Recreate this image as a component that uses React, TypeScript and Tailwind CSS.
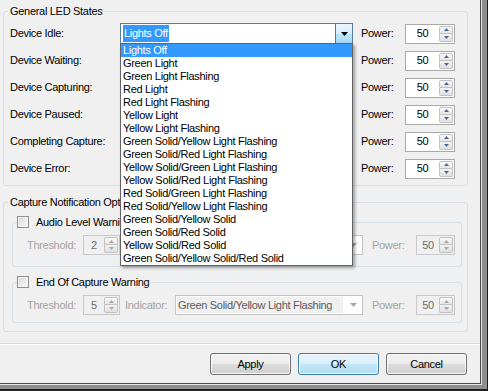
const options = [
  "Lights Off",
  "Green Light",
  "Green Light Flashing",
  "Red Light",
  "Red Light Flashing",
  "Yellow Light",
  "Yellow Light Flashing",
  "Green Solid/Yellow Light Flashing",
  "Green Solid/Red Light Flashing",
  "Yellow Solid/Green Light Flashing",
  "Yellow Solid/Red Light Flashing",
  "Red Solid/Green Light Flashing",
  "Red Solid/Yellow Light Flashing",
  "Green Solid/Yellow Solid",
  "Green Solid/Red Solid",
  "Yellow Solid/Red Solid",
  "Green Solid/Yellow Solid/Red Solid",
]

// rows 2-6 sit under the open list, so their values are not drawn
const states = [
  { label: "Device Idle:", value: "Lights Off" },
  { label: "Device Waiting:", value: "" },
  { label: "Device Capturing:", value: "" },
  { label: "Device Paused:", value: "" },
  { label: "Completing Capture:", value: "" },
  { label: "Device Error:", value: "" },
]

function SpinButtons({ disabled }: { disabled?: boolean }) {
  const tri = disabled ? "#a8a8a8" : "#50679a"
  return (
    <div className="flex h-[16px] w-[14px] flex-col">
      <div className="flex h-[8px] items-center justify-center rounded-t-[2px] border border-[#c2c2c2] bg-[linear-gradient(#fafafa,#e6e6e6)]">
        <svg width="5" height="3" viewBox="0 0 5 3">
          <path d="M0 3L2.5 0L5 3Z" fill={tri} />
        </svg>
      </div>
      <div className="flex h-[8px] items-center justify-center rounded-b-[2px] border border-t-0 border-[#c2c2c2] bg-[linear-gradient(#f2f2f2,#e0e0e0)]">
        <svg width="5" height="3" viewBox="0 0 5 3">
          <path d="M0 0H5L2.5 3Z" fill={tri} />
        </svg>
      </div>
    </div>
  )
}

function Spin({ value, width, disabled }: { value: string; width: string; disabled?: boolean }) {
  return (
    <div
      className={`flex h-[20px] items-center border pr-[1px] ${width} ${
        disabled ? "border-[#c9c9c9] bg-[#f0f0f0] text-[#6d6d6d]" : "border-[#a9a9a9] bg-white text-black"
      }`}
    >
      <span className="flex-1 text-center">{value}</span>
      <SpinButtons disabled={disabled} />
    </div>
  )
}

function Combo({ value, active }: { value: string; active?: boolean }) {
  return (
    <div
      className={`flex h-[21px] w-[233px] items-center border bg-white ${
        active ? "border-[#5b7a99]" : "border-[#abadb3]"
      }`}
    >
      <span className={`ml-[2px] px-[1px] ${active ? "bg-[#3399ff] text-white" : ""}`}>{value}</span>
      <div
        className={`ml-auto flex h-full w-[17px] items-center justify-center border-l ${
          active
            ? "border-[#3c7fb1] bg-[linear-gradient(#eaf6fd_0%,#d9f0fc_50%,#bee6fd_51%,#a7d9f5_100%)]"
            : "border-[#acacac] bg-[linear-gradient(#f2f2f2,#dddddd)]"
        }`}
      >
        <svg width="7" height="4" viewBox="0 0 7 4">
          <path d="M0 0H7L3.5 4Z" fill="#000" />
        </svg>
      </div>
    </div>
  )
}

function DisabledCombo({ value }: { value: string }) {
  return (
    <div className="flex h-[20px] w-[188px] items-center border border-[#c5c5c5] bg-white">
      <span className="m-[1px] flex h-[16px] flex-1 items-center bg-[#f0f0f0] pl-[1px] text-[#5a5a5a]">{value}</span>
      <div className="flex h-full w-[18px] items-center justify-center">
        <svg width="7" height="4" viewBox="0 0 7 4">
          <path d="M0 0H7L3.5 4Z" fill="#a6a6a6" />
        </svg>
      </div>
    </div>
  )
}

function CheckBox() {
  return (
    <span className="inline-block h-[12px] w-[12px] border border-[#8e8f8f] bg-[linear-gradient(135deg,#d8d8d8,#fcfcfc)] shadow-[inset_0_0_0_1px_#f4f4f4]" />
  )
}

function WarningGroup({
  title,
  threshold,
  covered,
  children,
}: {
  title: string
  threshold: string
  covered?: boolean
  children?: React.ReactNode
}) {
  return (
    <fieldset className="rounded-[3px] border border-[#d5dfe5]">
      <legend className="ml-[4px] pr-[2px] leading-[14px]">
        <span className="flex items-center">
          <CheckBox />
          <span className="ml-[7px]">{title}</span>
        </span>
      </legend>
      <div className="pl-[14px] pt-[6px]">
        <div className="flex h-[20px] items-center text-[#a3a3a3]">
          <span className="w-[56px]">Threshold:</span>
          <Spin value={threshold} width="w-[37px]" disabled />
          <span className="ml-[5px] w-[50px]">{covered ? "" : "Indicator:"}</span>
          <DisabledCombo value={covered ? "" : "Green Solid/Yellow Light Flashing"} />
          <span className="ml-[9px] w-[44px]">Power:</span>
          <Spin value="50" width="w-[39px]" disabled />
        </div>
        {children}
      </div>
    </fieldset>
  )
}

function Btn({ label, primary }: { label: string; primary?: boolean }) {
  return (
    <div
      className={`flex h-[22px] w-[81px] items-center justify-center rounded-[3px] border ${
        primary
          ? "border-[#3c7fb1] bg-[linear-gradient(#e9f5fc_0%,#daf0fc_50%,#c2e6f8_51%,#b3dcf3_100%)] shadow-[inset_0_0_0_1px_#f7fbfe]"
          : "border-[#707070] bg-[linear-gradient(#f2f2f2_0%,#ebebeb_50%,#dddddd_51%,#cfcfcf_100%)] shadow-[inset_0_0_0_1px_#fbfbfb]"
      }`}
    >
      {label}
    </div>
  )
}

export default function App() {
  return (
    <div className="h-[391px] w-[488px] bg-[#1e1e1e] font-['Liberation_Sans',Arial,sans-serif] text-[11px] tracking-[-0.3px] text-black">
      <div className="h-[389px] w-[487px] bg-[#8e8e8e]">
        <div className="h-[385px] w-[482px] bg-[#e4e4e4]">
          <div className="relative h-[384px] w-[481px] border-r border-b border-[#4a4a4a] bg-[#f0f0f0]">
            <div className="px-[3px] pt-[4px]">
              {/* general LED states */}
              <fieldset className="w-[465px] rounded-[3px] border border-[#d5dfe5]">
                <legend className="ml-[4px] px-[2px] leading-[14px]">General LED States</legend>
                <div className="flex flex-col gap-[6px] px-[6px] pt-[5px] pb-[6px]">
                  {states.map((s, i) => (
                    <div key={s.label} className="flex h-[21px] items-center">
                      <span className="w-[110px]">{s.label}</span>
                      <Combo value={s.value} active={i === 0} />
                      <span className="ml-[8px] w-[44px]">Power:</span>
                      <Spin value="50" width="w-[50px]" />
                    </div>
                  ))}
                </div>
              </fieldset>

              {/* capture notification options */}
              <fieldset className="mt-[9px] w-[465px] rounded-[3px] border border-[#d5dfe5]">
                <legend className="ml-[4px] px-[2px] leading-[14px]">Capture Notification Options</legend>
                <div className="flex flex-col gap-[8px] pt-[6px] pr-[5px] pb-[8px] pl-[8px]">
                  <WarningGroup title="Audio Level Warning" threshold="2" covered>
                    <div className="h-[11px]" />
                  </WarningGroup>
                  <WarningGroup title="End Of Capture Warning" threshold="5">
                    <div className="h-[7px]" />
                  </WarningGroup>
                </div>
              </fieldset>
            </div>

            <div className="mt-[11px] h-[2px] border-t border-b border-t-[#d9d9d9] border-b-white" />

            <div className="mt-[8px] flex justify-end gap-[7px] pr-[13px]">
              <Btn label="Apply" />
              <Btn label="OK" primary />
              <Btn label="Cancel" />
            </div>

            {/* open dropdown list */}
            <div className="absolute top-[43px] left-[120px] z-10 w-[233px] border border-[#646464] bg-white shadow-[2px_2px_3px_rgba(0,0,0,0.35)]">
              {options.map((o, i) => (
                <div
                  key={o}
                  className={`h-[13px] pl-[2px] leading-[13px] whitespace-nowrap ${i === 0 ? "bg-[#3399ff] text-white" : ""}`}
                >
                  {o}
                </div>
              ))}
            </div>
          </div>
        </div>
      </div>
    </div>
  )
}
